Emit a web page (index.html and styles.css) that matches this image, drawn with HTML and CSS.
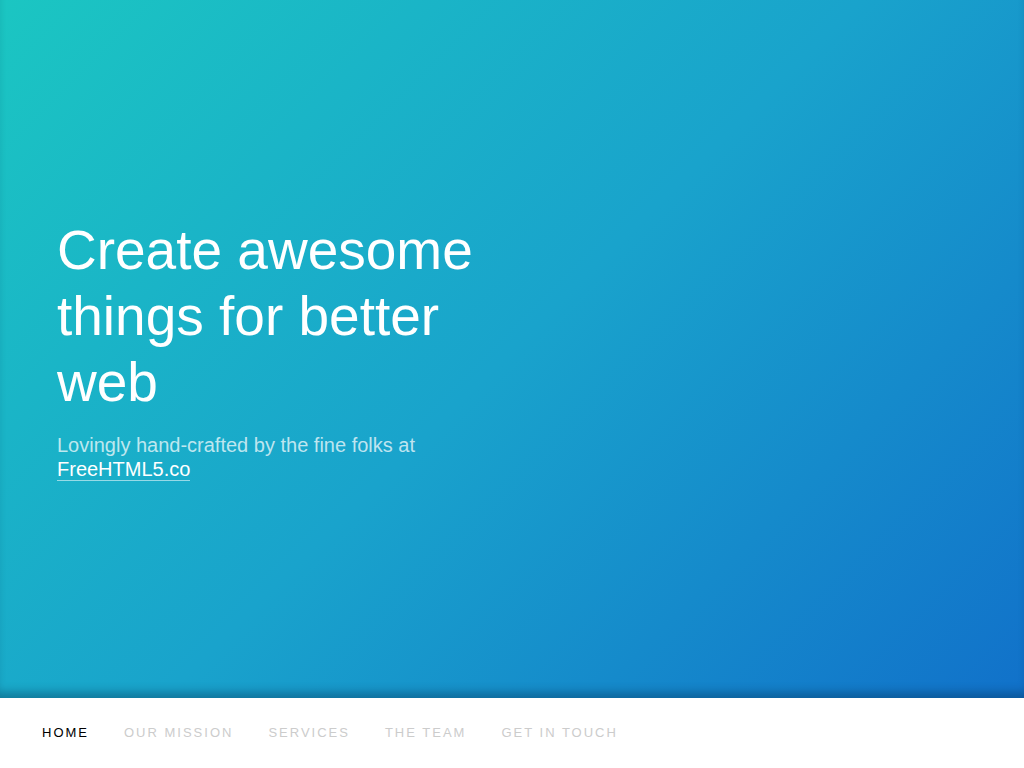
FILE: index.html
```html
<!DOCTYPE html>
<html lang="en">
<head>
<meta charset="utf-8">
<title>Create awesome things for better web</title>
<link rel="stylesheet" href="styles.css">
</head>
<body>
<header class="hero">
  <div class="hero-content">
    <h1 class="hero-title">Create awesome things for better web</h1>
    <p class="hero-sub">Lovingly hand-crafted by the fine folks at <a class="hero-link" href="#">FreeHTML5.co</a></p>
  </div>
</header>
<nav class="nav">
  <a class="nav-item active" href="#">Home</a>
  <a class="nav-item" href="#">Our Mission</a>
  <a class="nav-item" href="#">Services</a>
  <a class="nav-item" href="#">The Team</a>
  <a class="nav-item" href="#">Get In Touch</a>
</nav>
</body>
</html>
```
FILE: styles.css
```css
html, body {
  margin: 0;
  padding: 0;
}
body {
  font-family: "Liberation Sans", Arial, sans-serif;
  background: #ffffff;
  overflow: hidden;
}
.hero {
  height: 698px;
  background: linear-gradient(135deg, #1bc6c2 0%, #19a3cc 50%, #1171ca 100%);
  display: flex;
  align-items: center;
  padding-left: 57px;
  box-shadow: inset 0 -10px 10px -4px rgba(0, 40, 70, 0.35);
}
.hero-content {
  width: 470px;
}
.hero-title {
  margin: 0 0 18px;
  font-size: 55px;
  line-height: 66px;
  font-weight: 400;
  color: #ffffff;
}
.hero-sub {
  margin: 0;
  font-size: 20px;
  line-height: 24px;
  color: rgba(255, 255, 255, 0.72);
}
.hero-link {
  color: #ffffff;
  text-decoration: none;
  border-bottom: 1px solid rgba(255, 255, 255, 0.55);
}
.nav {
  height: 70px;
  background: #ffffff;
  display: flex;
  align-items: center;
  gap: 35px;
  padding-left: 42px;
  padding-bottom: 2px;
  box-sizing: border-box;
}
.nav-item {
  font-size: 13px;
  letter-spacing: 2px;
  text-transform: uppercase;
  text-decoration: none;
  color: #cccccc;
}
.nav-item.active {
  color: #000000;
}
```
